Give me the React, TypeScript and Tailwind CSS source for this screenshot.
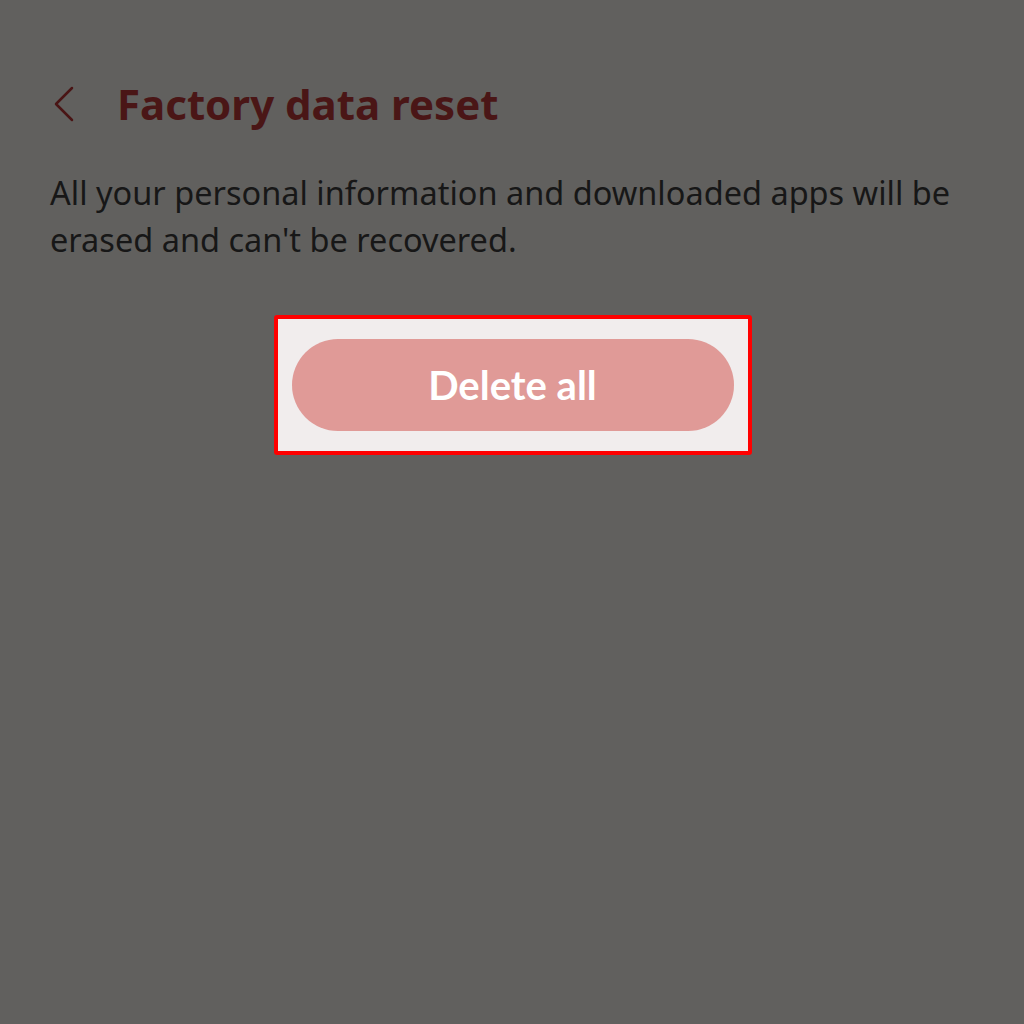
export default function App() {
  return (
    <div className="w-[1024px] h-[1024px] bg-[#61605e] overflow-hidden" style={{ fontFamily: '"Noto Sans", sans-serif' }}>
      <div className="flex items-center pl-[52px] pt-[78px]">
        <svg width="24" height="38" viewBox="0 0 24 38" fill="none" stroke="#4a1515" strokeWidth="2.5" strokeLinecap="round" strokeLinejoin="round">
          <path d="M20 3 L4 19 L20 35" />
        </svg>
        <h1 className="ml-[41px] text-[42px] leading-[52px] font-bold text-[#4a1616]">Factory data reset</h1>
      </div>
      <p className="mt-[39px] pl-[50px] pr-[40px] text-[32.5px] leading-[47px] text-[#171717]">
        All your personal information and downloaded apps will be erased and can't be recovered.
      </p>
      <div className="flex justify-center mt-[52px]">
        <div className="w-[478px] h-[140px] border-[4px] border-[#ff0000] rounded-[3px] bg-[#f1eded] flex items-center justify-center ml-[1px]">
          <button className="w-[442px] h-[92px] rounded-full bg-[#e09a97] text-white text-[40px] font-bold" style={{ fontFamily: 'Lato, sans-serif' }}>
            Delete all
          </button>
        </div>
      </div>
    </div>
  );
}
